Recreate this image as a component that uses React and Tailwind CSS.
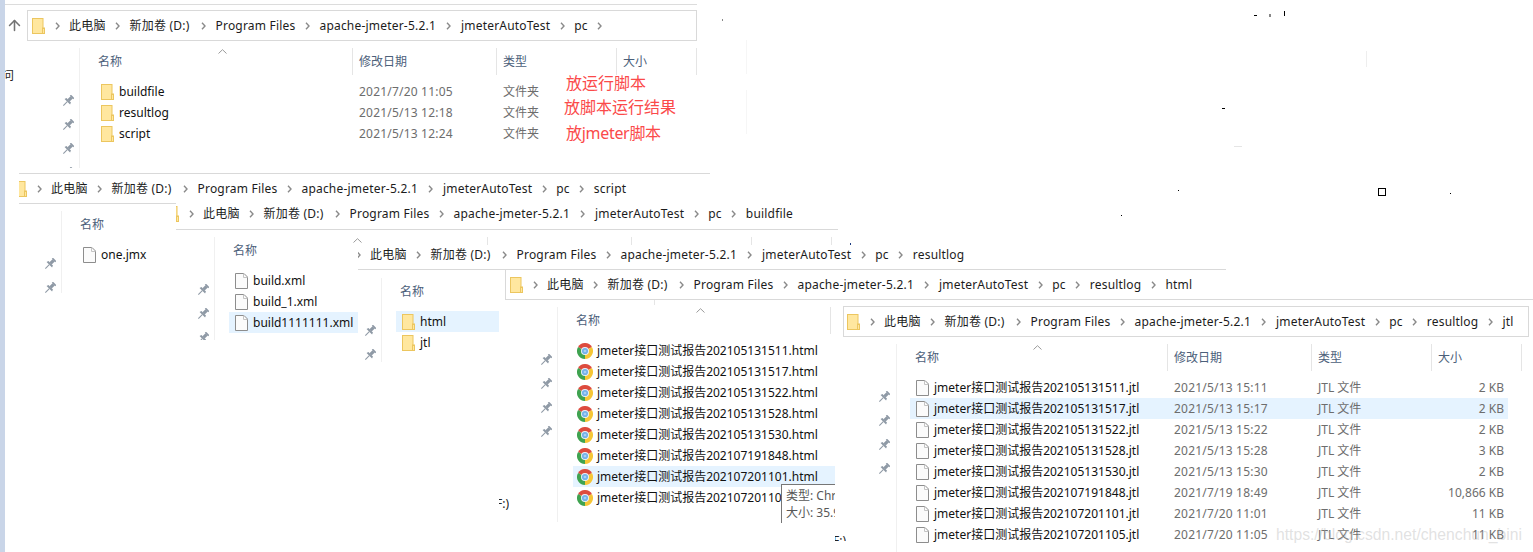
import React, { Fragment } from "react";
import { ArrowUp } from "lucide-react";

const BASE = ["此电脑", "新加卷 (D:)", "Program Files", "apache-jmeter-5.2.1", "jmeterAutoTest", "pc"];

function Folder({ className = "" }) {
  return (
    <svg viewBox="0 0 13 16" className={`w-[13px] h-[16px] shrink-0 ${className}`}>
      <rect x="0.5" y="0.5" width="10.5" height="15" fill="#ffe79f" stroke="#ecc65f" />
      <rect x="10.5" y="10" width="2" height="5.5" fill="#ffe79f" stroke="#ecc65f" strokeWidth="1" />
    </svg>
  );
}

function FileIcon() {
  return (
    <svg viewBox="0 0 13 16" className="w-[13px] h-[16px] shrink-0">
      <path d="M.5.5H9L12.5 4V15.5H.5z" fill="#fbfbfb" stroke="#8d8d8d" />
      <path d="M8.5.5V4.5H12.5" fill="none" stroke="#c4c4c4" />
    </svg>
  );
}

function Chrome() {
  return (
    <svg viewBox="0 0 16 16" className="w-[16px] h-[16px] shrink-0">
      <path d="M8 8L1.07 4A8 8 0 0 1 14.93 4Z" fill="#dd4b3e" />
      <path d="M8 8L14.93 4A8 8 0 0 1 8 16Z" fill="#f6c636" />
      <path d="M8 8L8 16A8 8 0 0 1 1.07 4Z" fill="#3fa350" />
      <circle cx="8" cy="8" r="4" fill="#ecf2f8" />
      <circle cx="8" cy="8" r="3.1" fill="#74b2ea" />
      <circle cx="8" cy="8" r="1.3" fill="#a9d0f4" />
    </svg>
  );
}

function Pin() {
  return (
    <svg viewBox="0 0 12 12" className="w-[12px] h-[12px] shrink-0">
      <g transform="rotate(45 6 6)" fill="#8e99a5">
        <rect x="3.6" y="-0.6" width="4.8" height="1.6" />
        <rect x="4.4" y="0.8" width="3.2" height="4.4" />
        <path d="M2.8 5h6.4l.7 2h-7.8z" />
        <rect x="5.5" y="7" width="1" height="5.6" />
      </g>
    </svg>
  );
}

function Chevron() {
  return (
    <span className="w-[24px] flex justify-center shrink-0">
      <svg viewBox="0 0 5 8" className="w-[5px] h-[8px]">
        <path d="M1 .7L4 4 1 7.3" fill="none" stroke="#8a8a8a" strokeWidth="1.4" />
      </svg>
    </span>
  );
}

function Crumbs({ items, className = "", trailing }) {
  return (
    <div className={`flex items-center whitespace-nowrap text-[12px] tracking-[0.2px] text-[#1c1c1c] ${className}`}>
      <Folder />
      {items.map((t) => (
        <Fragment key={t}>
          <Chevron />
          <span className={t.startsWith("新") ? "mr-[2px]" : t.startsWith("apache") ? "mr-px" : ""}>{t}</span>
        </Fragment>
      ))}
      {trailing && <Chevron />}
    </div>
  );
}

function Header({ full }) {
  const wide = full === "wide";
  const bare = full === "ticks";
  return (
    <div className="relative flex h-[27px] text-[12px] text-[#4c607a]">
      <svg viewBox="0 0 9 5" className={`absolute ${wide ? "left-[136px]" : "left-[138px]"} top-[1px] w-[9px] h-[5px]`}>
        <path d="M.5 4.5L4.5 .7 8.5 4.5" fill="none" stroke="#9a9a9a" />
      </svg>
      <div className={`${wide ? "w-[271px]" : "w-[273px]"} shrink-0 border-r border-[#e5e5e5] pl-[18px] flex items-center`}>名称</div>
      {full && (
        <>
          <div className="w-[144px] shrink-0 border-r border-[#e5e5e5] pl-[6px] flex items-center">{!bare && "修改日期"}</div>
          <div className="w-[120px] shrink-0 border-r border-[#e5e5e5] pl-[6px] flex items-center">{!bare && "类型"}</div>
          <div className={`${wide ? "w-[90px]" : "w-[80px]"} shrink-0 border-r border-[#e5e5e5] pl-[6px] flex items-center`}>{!bare && "大小"}</div>
        </>
      )}
    </div>
  );
}

function Row({ icon, name, selected, date, type, size, className = "", nameClass = "" }) {
  return (
    <div className={`flex h-[21px] items-center text-[12px] whitespace-nowrap ${selected ? "bg-[#e5f3ff]" : ""} ${className}`}>
      <span className="w-[24px] flex justify-center shrink-0">{icon}</span>
      <span className={`text-[#111111] ${nameClass}`}>{name}</span>
      {date && <span className="w-[144px] shrink-0 text-[#6d6d6d] tracking-[0.2px]">{date}</span>}
      {type && <span className="w-[114px] shrink-0 text-[#6d6d6d]">{type}</span>}
      {size && <span className="w-[72px] shrink-0 text-right text-[#6d6d6d]">{size}</span>}
    </div>
  );
}

function Body({ pins, pinClass, bodyClass, children }) {
  return (
    <div className={`flex overflow-hidden ${bodyClass}`}>
      <div className={`flex flex-col items-end gap-[12px] pt-[47px] shrink-0 ${pinClass}`}>
        {Array.from({ length: pins }, (_, i) => (
          <Pin key={i} />
        ))}
      </div>
      <div className="border-l border-[#f0f0f0] flex-1 min-w-0">
        {children}
      </div>
    </div>
  );
}

const WIN1 = [
  ["buildfile", "2021/7/20 11:05"],
  ["resultlog", "2021/5/13 12:18"],
  ["script", "2021/5/13 12:24"],
];
const WIN5 = ["202105131511", "202105131517", "202105131522", "202105131528", "202105131530", "202107191848", "202107201101", "202107201105"];
const WIN6 = [
  ["202105131511", "2021/5/13 15:11", "2 KB"],
  ["202105131517", "2021/5/13 15:17", "2 KB"],
  ["202105131522", "2021/5/13 15:22", "2 KB"],
  ["202105131528", "2021/5/13 15:28", "3 KB"],
  ["202105131530", "2021/5/13 15:30", "2 KB"],
  ["202107191848", "2021/7/19 18:49", "10,866 KB"],
  ["202107201101", "2021/7/20 11:01", "11 KB"],
  ["202107201105", "2021/7/20 11:05", "11 KB"],
];

export default function App() {
  return (
    <div className="relative w-[1533px] h-[552px] bg-white overflow-hidden font-['Noto_Sans','Noto_Sans_CJK_SC',sans-serif]">
      {/* Window 1: pc */}
      <section className="absolute left-[5px] top-0 w-[692px] h-[173px] bg-white pt-[4px]">
        <div className="h-px bg-[#dcdcdc]" />
        <div className="flex mt-[5px]">
          <div className="w-[22px] pr-[4px] flex items-center justify-center">
            <ArrowUp size={17} strokeWidth={2.2} color="#737373" />
          </div>
          <div className="flex-1 h-[31px] border border-[#d9d9d9] pl-[4px] flex items-center">
            <Crumbs items={BASE} trailing />
          </div>
        </div>
        <Body pins={4} pinClass="w-[74px] pr-[5px]" bodyClass="mt-[7px] h-[120px]">
          <Header full />
          <div className="mt-[6px] ml-[15px]">
            {WIN1.map(([n, d]) => (
              <Row key={n} icon={<Folder className="ml-[1px]" />} name={n} nameClass="w-[240px]" date={d} type="文件夹" />
            ))}
          </div>
        </Body>
        <div className="absolute left-[561px] top-[73px] text-[16px] leading-[20px] text-[#fb4a4a]">放运行脚本</div>
        <div className="absolute left-[559px] top-[97px] text-[16px] leading-[20px] text-[#fb4a4a]">放脚本运行结果</div>
        <div className="absolute left-[561px] top-[123px] text-[16px] leading-[20px] tracking-[-0.3px] text-[#fb4a4a]">放jmeter脚本</div>
      </section>

      {/* Window 2: script */}
      <section className="absolute left-[19px] top-[173px] w-[691px] h-[130px] bg-white overflow-hidden">
        <div className="h-[31px] border-y border-[#d9d9d9] flex items-center">
          <Crumbs items={[...BASE, "script"]} className="-ml-[5px]" />
        </div>
        <Body pins={2} pinClass="w-[42px] pr-[5px]" bodyClass="mt-[7px] h-[82px]">
          <Header />
          <div className="mt-[6px] ml-[15px]">
            <Row icon={<FileIcon />} name="one.jmx" />
          </div>
        </Body>
      </section>

      {/* Window 3: buildfile */}
      <section className="absolute left-[176px] top-[203px] w-[662px] h-[137px] bg-white overflow-hidden">
        <div className="h-[27px] border-b border-[#d9d9d9] pb-[5px] flex items-center">
          <Crumbs items={[...BASE, "buildfile"]} className="-ml-[10px]" />
        </div>
        <Body pins={3} pinClass="w-[38px] pr-[5px]" bodyClass="mt-[7px] h-[103px]">
          <Header full="ticks" />
          <div className="mt-[6px] ml-[14px]">
            <Row icon={<FileIcon />} name="build.xml" />
            <Row icon={<FileIcon />} name="build_1.xml" />
            <Row icon={<FileIcon />} name="build1111111.xml" selected className="w-[129px]" />
          </div>
        </Body>
      </section>

      {/* Window 4: resultlog */}
      <section className="absolute left-[358px] top-[245px] w-[868px] h-[125px] bg-white overflow-hidden">
        <div className="h-[25px] border-b border-[#d9d9d9] pb-[5px] flex items-center">
          <Crumbs items={[...BASE, "resultlog"]} className="-ml-[25px]" />
        </div>
        <Body pins={2} pinClass="w-[23px] pr-[5px]" bodyClass="mt-[8px] h-[84px]">
          <Header />
          <div className="mt-[6px] ml-[14px]">
            <Row icon={<Folder className="ml-[1px]" />} name="html" selected className="w-[103px]" />
            <Row icon={<Folder className="ml-[1px]" />} name="jtl" />
          </div>
        </Body>
      </section>

      {/* Window 5: html */}
      <section className="absolute left-[505px] top-[270px] w-[1028px] h-[253px] overflow-hidden">
        <div className="h-[30px] bg-white border-l border-b border-[#d9d9d9] pl-[4px] flex items-center">
          <Crumbs items={[...BASE, "resultlog", "html"]} />
        </div>
        <div className="relative mt-[7px] w-[330px] h-[216px] bg-white overflow-hidden">
          <Body pins={4} pinClass="w-[52px] pr-[5px]" bodyClass="h-[215px]">
            <Header />
            <div className="mt-[6px] ml-[15px]">
              {WIN5.map((d, i) => (
                <Row key={d} icon={<Chrome />} name={`jmeter接口测试报告${d}.html`} selected={i === 6} />
              ))}
            </div>
          </Body>
          <div className="absolute left-[276px] top-[177px] w-[90px] h-[60px] bg-white border border-[#767676] pl-[4px] pt-[2px] text-[12px] leading-[17px] text-[#575757] whitespace-nowrap">
            <div>类型: Chrome</div>
            <div>大小: 35.9 KB</div>
            <div>修改日期: 2021</div>
          </div>
        </div>
      </section>

      {/* Window 6: jtl */}
      <section className="absolute left-[842px] top-[301px] w-[691px] h-[251px] bg-white pt-[5px] overflow-hidden">
        <div className="ml-px w-[686px] h-[31px] border border-[#d9d9d9] pl-[3px] flex items-center">
          <Crumbs items={[...BASE, "resultlog", "jtl"]} />
        </div>
        <Body pins={4} pinClass="w-[54px] pr-[6px]" bodyClass="mt-[7px] h-[208px]">
          <div className="w-[625px]">
            <Header full="wide" />
            <div className="mt-[6px] ml-[13px] w-[598px]">
              {WIN6.map(([d, t, s], i) => (
                <Row key={d} icon={<FileIcon />} name={`jmeter接口测试报告${d}.jtl`} nameClass="w-[240px]" date={t} type="JTL 文件" size={s} selected={i === 1} />
              ))}
            </div>
          </div>
        </Body>
      </section>

      {/* Cropped fragments and stray marks */}
      <div className="absolute left-0 top-0 w-[5px] h-full bg-[#c9d5e8]" />
      <span className="absolute left-[5px] top-[67px] w-[9px] h-[17px] overflow-hidden text-[12px] leading-[17px] text-[#222222]">
        <span className="block -ml-[3px]">问</span>
      </span>
      <span className="absolute left-[499px] top-[495px] w-[10px] overflow-hidden text-[12px] leading-[17px] text-[#222222] whitespace-nowrap flex justify-end">F:)</span>
      <span className="absolute left-[835px] top-[535px] w-[11px] h-[6px] overflow-hidden text-[12px] leading-[12px] text-[#222222] whitespace-nowrap flex justify-end">F:)</span>
      <span className="absolute left-[1378px] top-[188px] w-[8px] h-[8px] border border-black bg-white" />
      <span className="absolute left-[1254px] top-[15px] w-[3px] h-px bg-black" />
      <span className="absolute left-[1269px] top-[14px] w-[2px] h-[3px] bg-[#888888]" />
      <span className="absolute left-[1284px] top-[11px] w-px h-[5px] bg-black" />
      <span className="absolute left-[1222px] top-[108px] w-[3px] h-px bg-black" />
      <span className="absolute left-[1178px] top-[190px] w-px h-px bg-black" />
      <span className="absolute left-[1450px] top-[193px] w-px h-px bg-black" />
      <span className="absolute left-[1121px] top-[215px] w-px h-px bg-black" />
      <span className="absolute left-[850px] top-[243px] w-px h-[2px] bg-[#1a3a80]" />
      <span className="absolute left-[722px] top-[19px] w-px h-[2px] bg-[#888888]" />
      <span className="absolute left-[746px] top-[40px] w-px h-[34px] bg-[#f6f6f6]" />
      <span className="absolute left-[746px] top-[90px] w-px h-[44px] bg-[#f6f6f6]" />
      <span className="absolute left-[1366px] top-[51px] w-px h-[16px] bg-[#eeeeee]" />
      <span className="absolute left-[1234px] top-[146px] w-[8px] h-px bg-[#e5e5e5]" />
      <span className="absolute left-[1276px] top-[522px] text-[15.7px] leading-[26px] text-[#b4b4b4]/40 whitespace-nowrap font-['Liberation_Sans',sans-serif]">https://blog.csdn.net/chenchun_bini</span>
    </div>
  );
}
